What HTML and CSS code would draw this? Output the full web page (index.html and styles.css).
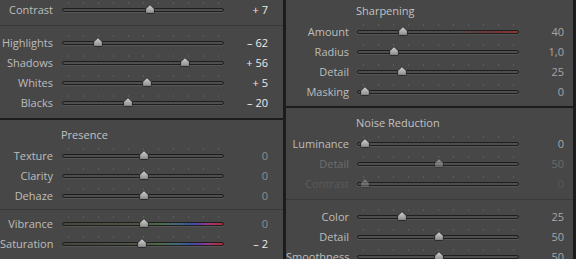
FILE: index.html
```html
<!DOCTYPE html>
<html>
<head>
<meta charset="utf-8">
<link rel="stylesheet" href="styles.css">
</head>
<body>
<svg class="defs" aria-hidden="true">
  <defs>
    <linearGradient id="tg" x1="0" y1="0" x2="0" y2="1">
      <stop offset="0" stop-color="#d4d4d4"/>
      <stop offset="1" stop-color="#8a8a8a"/>
    </linearGradient>
    <symbol id="th" viewBox="0 0 10 10">
      <path d="M5 0.6 L9.4 4.8 V8.4 Q9.4 9.4 8.4 9.4 H1.6 Q0.6 9.4 0.6 8.4 V4.8 Z" fill="url(#tg)" stroke="#262626" stroke-width="1"/>
    </symbol>
  </defs>
</svg>
<div class="app">
  <section class="panel left">
    <div class="group g1">
      <div class="row"><span class="label">Contrast</span><div class="track"><svg class="thumb" style="left:54.3%"><use href="#th"/></svg></div><span class="val hi">+ 7</span></div>
    </div>
    <div class="group g2">
      <div class="row"><span class="label">Highlights</span><div class="track"><svg class="thumb" style="left:21.6%"><use href="#th"/></svg></div><span class="val hi">– 62</span></div>
      <div class="row"><span class="label">Shadows</span><div class="track"><svg class="thumb" style="left:76.5%"><use href="#th"/></svg></div><span class="val hi">+ 56</span></div>
      <div class="row"><span class="label">Whites</span><div class="track"><svg class="thumb" style="left:52.5%"><use href="#th"/></svg></div><span class="val hi">+ 5</span></div>
      <div class="row"><span class="label">Blacks</span><div class="track"><svg class="thumb" style="left:40.7%"><use href="#th"/></svg></div><span class="val hi">– 20</span></div>
    </div>
    <div class="group g3">
      <div class="head">Presence</div>
      <div class="row"><span class="label">Texture</span><div class="track"><svg class="thumb" style="left:50.5%"><use href="#th"/></svg></div><span class="val zero">0</span></div>
      <div class="row"><span class="label">Clarity</span><div class="track"><svg class="thumb" style="left:50.5%"><use href="#th"/></svg></div><span class="val zero">0</span></div>
      <div class="row"><span class="label">Dehaze</span><div class="track"><svg class="thumb" style="left:50.5%"><use href="#th"/></svg></div><span class="val zero">0</span></div>
    </div>
    <div class="group g4">
      <div class="row"><span class="label">Vibrance</span><div class="track color"><svg class="thumb" style="left:50.5%"><use href="#th"/></svg></div><span class="val zero">0</span></div>
      <div class="row"><span class="label">Saturation</span><div class="track color"><svg class="thumb" style="left:49.6%"><use href="#th"/></svg></div><span class="val hi">– 2</span></div>
    </div>
  </section>
  <div class="vdiv"></div>
  <section class="panel right">
    <div class="group r1">
      <div class="head">Sharpening</div>
      <div class="row"><span class="label">Amount</span><div class="track amount"><svg class="thumb" style="left:28.4%"><use href="#th"/></svg></div><span class="val">40</span></div>
      <div class="row"><span class="label">Radius</span><div class="track"><svg class="thumb" style="left:22.2%"><use href="#th"/></svg></div><span class="val">1,0</span></div>
      <div class="row"><span class="label">Detail</span><div class="track"><svg class="thumb" style="left:27.2%"><use href="#th"/></svg></div><span class="val">25</span></div>
      <div class="row"><span class="label">Masking</span><div class="track"><svg class="thumb" style="left:4.3%"><use href="#th"/></svg></div><span class="val">0</span></div>
    </div>
    <div class="group r2">
      <div class="head">Noise Reduction</div>
      <div class="row"><span class="label">Luminance</span><div class="track"><svg class="thumb" style="left:4.3%"><use href="#th"/></svg></div><span class="val">0</span></div>
      <div class="row off"><span class="label">Detail</span><div class="track"><svg class="thumb" style="left:50.6%"><use href="#th"/></svg></div><span class="val">50</span></div>
      <div class="row off2"><span class="label">Contrast</span><div class="track"><svg class="thumb" style="left:4.3%"><use href="#th"/></svg></div><span class="val">0</span></div>
    </div>
    <div class="group r3">
      <div class="row"><span class="label">Color</span><div class="track"><svg class="thumb" style="left:27.2%"><use href="#th"/></svg></div><span class="val">25</span></div>
      <div class="row"><span class="label">Detail</span><div class="track"><svg class="thumb" style="left:50.6%"><use href="#th"/></svg></div><span class="val">50</span></div>
      <div class="row"><span class="label">Smoothness</span><div class="track"><svg class="thumb" style="left:50.6%"><use href="#th"/></svg></div><span class="val">50</span></div>
    </div>
  </section>
  <div class="edge"></div>
</div>
</body>
</html>
```
FILE: styles.css
```css
* { box-sizing: border-box; }
html, body {
  margin: 0;
  padding: 0;
  width: 576px;
  height: 259px;
  overflow: hidden;
  background: #474747;
}
.defs { position: absolute; width: 0; height: 0; overflow: hidden; }
.app {
  display: flex;
  height: 259px;
  font-family: "Open Sans", "Noto Sans", sans-serif;
  font-size: 11px;
  color: #bdbdbd;
}
.panel { display: flex; flex-direction: column; }
.left { width: 283px; }
.vdiv { width: 3px; background: #1c1c1c; }
.right { width: 287px; }
.edge { width: 3px; background: #1c1c1c; }

.group { display: flex; flex-direction: column; }
.g1 { margin-top: -1px; padding-bottom: 6px; border-bottom: 1px solid #3a3a3a; }
.g2 { padding-top: 6px; padding-bottom: 6px; border-bottom: 2px solid #1c1c1c; }
.g3 { padding-top: 5px; padding-bottom: 4px; border-bottom: 1px solid #3a3a3a; }
.g4 { padding-top: 3px; }

.r1 { padding-top: 1px; padding-bottom: 5px; border-bottom: 2px solid #1c1c1c; }
.r2 { padding-top: 5px; padding-bottom: 6px; border-bottom: 1px solid #3a3a3a; }
.r3 { padding-top: 6px; }

.head {
  height: 20px;
  line-height: 20px;
  padding-left: 61px;
  color: #c2c2c2;
}
.right .head { padding-left: 70px; }

.row {
  display: flex;
  align-items: center;
  height: 20px;
  white-space: nowrap;
}
.label {
  width: 53px;
  margin-right: 9px;
  text-align: right;
  color: #bdbdbd;
}
.right .label { width: 63px; margin-right: 8px; }
.val {
  width: 44px;
  text-align: right;
  color: #a6a6a6;
}
.right .val { width: 45px; }
.val.hi { color: #ececec; }
.val.zero { color: #8e8e8e; }

.track {
  position: relative;
  width: 162px;
  height: 4px;
  margin-top: 2px;
  border: 1px solid #1e1e1e;
  border-radius: 3px;
  background: #4e4e4e;
  box-shadow: 0 1px 0 #555;
}
.track::before {
  content: "";
  position: absolute;
  left: 5px;
  top: -7px;
  width: 151px;
  height: 2px;
  background: repeating-linear-gradient(to right, #5c5c5c 0 1px, transparent 1px 15px);
}
.track.color {
  background: linear-gradient(to right, #45473f 0%, #4d5446 45%, #4f6a4c 62%, #3f6a7a 72%, #3d4fa0 80%, #6a3ca0 86%, #9a3a80 91%, #a83246 96%, #a8303c 100%);
}
.track.amount {
  background: linear-gradient(to right, #4e4e4e 0%, #4e4e4e 62%, #6a3838 82%, #8a3434 100%);
}
.thumb {
  position: absolute;
  top: -5px;
  width: 10px;
  height: 10px;
  transform: translateX(-50%);
  overflow: visible;
}

.row.off .label { color: #6e6e6e; }
.row.off .val { color: #6a6a6a; }
.row.off .thumb { opacity: 0.55; }
.row.off2 .label { color: #5a5a5a; }
.row.off2 .val { color: #575757; }
.row.off2 .thumb { opacity: 0.4; }
```
